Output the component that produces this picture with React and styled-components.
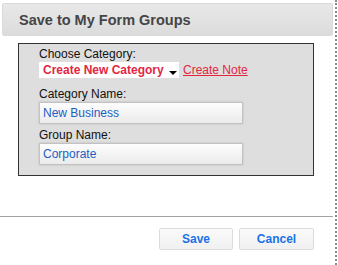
import * as React from "react"
import styled, { createGlobalStyle } from "styled-components"

const GlobalStyle = createGlobalStyle`
  html, body {
    margin: 0;
    padding: 0;
    background: #fff;
    font-family: "Liberation Sans", Arial, sans-serif;
  }
`

const Dialog = styled.div`
  display: flex;
  flex-direction: column;
  width: 335px;
  height: 265px;
  border-right: 2px dotted #8a8a8a;
`

const Header = styled.div`
  display: flex;
  align-items: center;
  height: 33px;
  margin: 3px 2px 0 2px;
  padding-left: 16px;
  box-sizing: border-box;
  border: 1px solid #dadada;
  border-radius: 2px;
  background: linear-gradient(#e8e8e8, #dcdcdc);
`

const Title = styled.h1`
  margin: 0;
  font-size: 14.5px;
  font-weight: bold;
  color: #454545;
`

const Panel = styled.div`
  width: 296px;
  margin: 7px 0 0 18px;
  padding: 4px 20px 10px 20px;
  box-sizing: border-box;
  border: 1px solid #333;
  background: #dedede;
`

const Label = styled.div`
  font-size: 12px;
  line-height: 13px;
  color: #111;
  margin-top: ${p => p.$top || 0}px;
`

const SelectRow = styled.div`
  display: flex;
  align-items: center;
  gap: 4px;
  margin-top: 1px;
`

const Select = styled.div`
  display: flex;
  align-items: center;
  width: 140px;
  height: 16px;
  box-sizing: border-box;
  padding-left: 4px;
  background: #fff;
  font-size: 12px;
  line-height: 16px;
  font-weight: bold;
  color: #e3263f;
`

const Caret = styled.span`
  width: 0;
  height: 0;
  margin: 5px 0 0 5px;
  border-left: 4px solid transparent;
  border-right: 4px solid transparent;
  border-top: 4px solid #000;
`

const NoteLink = styled.a`
  font-size: 12px;
  line-height: 16px;
  color: #e3263f;
  text-decoration: underline;
  cursor: pointer;
`

const Input = styled.div`
  width: 204px;
  height: 22px;
  margin-top: 1px;
  padding-left: 3px;
  box-sizing: border-box;
  border: 1px solid #c2c2c2;
  background: linear-gradient(#fdfdfd, #ebebeb);
  box-shadow: 0 0 2px rgba(0, 0, 0, 0.15);
  font-size: 12px;
  line-height: 20px;
  color: #1c5ec4;
`

const Footer = styled.div`
  display: flex;
  justify-content: flex-end;
  gap: 6px;
  margin: 40px 2px 0 0;
  padding: 11px 19px 0 0;
  border-top: 1px solid #a3a3a3;
`

const Button = styled.button`
  width: ${p => p.$w}px;
  height: 22px;
  padding: 0;
  border: 1px solid #dcdcdc;
  border-radius: 2px;
  background: linear-gradient(#fafafa, #f0f0f0);
  font-family: "Liberation Sans", Arial, sans-serif;
  font-size: 12px;
  font-weight: bold;
  color: #1b72e6;
  cursor: pointer;
`

const App = () => (
  <>
    <GlobalStyle />
    <Dialog>
      <Header>
        <Title>Save to My Form Groups</Title>
      </Header>
      <Panel>
        <Label>Choose Category:</Label>
        <SelectRow>
          <Select>
            Create New Category
            <Caret />
          </Select>
          <NoteLink>Create Note</NoteLink>
        </SelectRow>
        <Label $top={10}>Category Name:</Label>
        <Input>New Business</Input>
        <Label $top={5}>Group Name:</Label>
        <Input>Corporate</Input>
      </Panel>
      <Footer>
        <Button $w={74}>Save</Button>
        <Button $w={75}>Cancel</Button>
      </Footer>
    </Dialog>
  </>
)

export default App
